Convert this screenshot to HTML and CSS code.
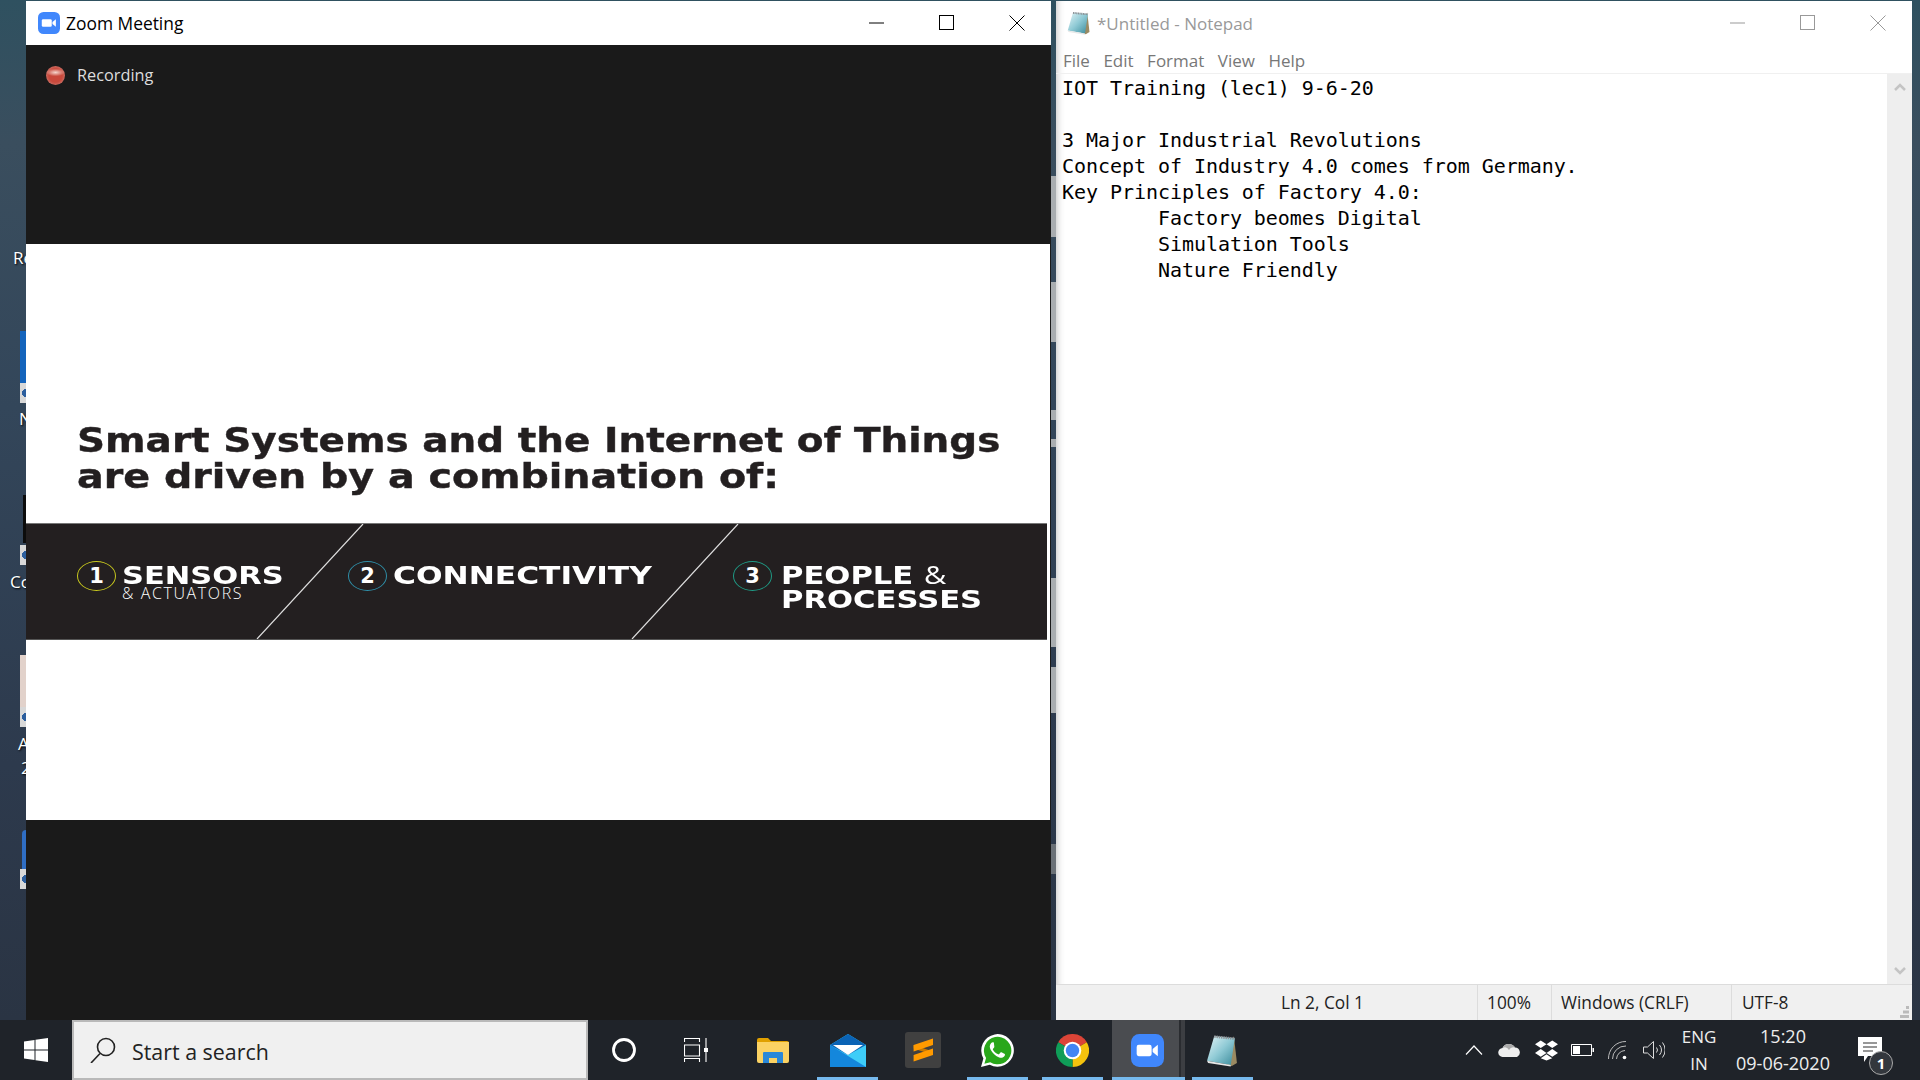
FILE: index.html
```html
<!DOCTYPE html>
<html>
	<head>
		<meta charset="utf-8">
		<title>Zoom Meeting</title>
		<link rel="stylesheet" href="styles.css">
	</head>
	<body>
		<svg class="defs" width="0" height="0">
			<symbol id="zoom-logo" viewBox="0 0 32 32">
				<rect width="32" height="32" rx="8" fill="#4087fc"/>
				<rect x="5.5" y="10.5" width="14.5" height="11" rx="2" fill="#fff"/>
				<path d="M21 14.5l5-4v11l-5-4z" fill="#fff"/>
			</symbol>
			<symbol id="notepad-logo" viewBox="0 0 32 32">
				<defs>
					<linearGradient id="pad" x1="0" y1="0" x2="1" y2="1">
						<stop offset="0" stop-color="#e4f4f6"/>
						<stop offset=".5" stop-color="#8fcad5"/>
						<stop offset="1" stop-color="#3a8a9a"/>
					</linearGradient>
				</defs>
				<path d="M27 2l3 26-5 3-6-2z" fill="#9a8a62"/>
				<path d="M8 2l20 2-4 26L1 26z" fill="url(#pad)"/>
				<path d="M1 26l23 4v1.500L2 28z" fill="#e8e8e8"/>
				<path d="M8 2.500l20 2" fill="none" stroke="#8c9094" stroke-width="2.500" stroke-dasharray="1.400 .8"/>
			</symbol>
		</svg>

		<div class="desktop">
			<!-- icons on the desktop, mostly hidden by the windows -->
			<span class="dlabel dlabel-re">Re</span>
			<div class="peek peek-blue"></div>
			<div class="peek peek-box peek-box1"></div>
			<span class="dlabel dlabel-n">N</span>
			<div class="peek peek-black"></div>
			<div class="peek peek-box peek-box2"></div>
			<span class="dlabel dlabel-co">Co</span>
			<div class="peek peek-pink"></div>
			<div class="peek peek-box peek-box3"></div>
			<span class="dlabel dlabel-a">A</span>
			<span class="dlabel dlabel-2">2</span>
			<div class="peek peek-blue2"></div>
			<div class="peek peek-box peek-box4"></div>
			<div class="peek peek-gap peek-gap1"></div>
			<div class="peek peek-gap peek-gap2"></div>
			<div class="peek peek-gap peek-gap3"></div>
			<div class="peek peek-gap peek-gap4"></div>
			<div class="peek peek-gap peek-gap5"></div>
			<div class="peek peek-gap peek-gap6"></div>
			<div class="peek peek-gap peek-gap7"></div>

			<!-- zoom window -->
			<div class="window zoom-win">
				<div class="titlebar">
					<svg class="title-icon zoom-title-icon"><use href="#zoom-logo"/></svg>
					<span class="title-text">Zoom Meeting</span>
					<div class="win-btns">
						<svg viewBox="0 0 16 16" class="win-btn"><path d="M0 8h15"/></svg>
						<svg viewBox="0 0 16 16" class="win-btn"><rect x=".5" y=".5" width="14" height="14"/></svg>
						<svg viewBox="0 0 16 16" class="win-btn"><path d="M.5.5l15 15M15.5.5l-15 15"/></svg>
					</div>
				</div>
				<div class="meeting-top">
					<div class="rec">
						<span class="rec-dot"></span>
						<span>Recording</span>
					</div>
				</div>
				<div class="slide">
					<div class="slide-head">
						<h1>
							<span class="line1">Smart Systems and the Internet of Things</span>
							<span class="line2">are driven by a combination of:</span>
						</h1>
					</div>
					<div class="banner">
						<div class="item">
							<span class="num num1">1</span>
							<div class="item-text">
								<b class="sensors">SENSORS</b>
								<small>&amp; ACTUATORS</small>
							</div>
						</div>
						<div class="item">
							<span class="num num2">2</span>
							<div class="item-text">
								<b class="connect">CONNECTIVITY</b>
							</div>
						</div>
						<div class="item">
							<span class="num num3">3</span>
							<div class="item-text item-text3">
								<b>PEOPLE <i>&amp;</i></b>
								<b>PROCESSES</b>
							</div>
						</div>
						<svg class="slashes" viewBox="0 0 1021 115">
							<path d="M337 0L231 115M712 0L606 115"/>
						</svg>
					</div>
				</div>
				<div class="meeting-bottom"></div>
			</div>

			<!-- notepad window -->
			<div class="window note-win">
				<div class="titlebar note-title">
					<svg class="title-icon note-title-icon"><use href="#notepad-logo"/></svg>
					<span class="title-text">*Untitled - Notepad</span>
					<div class="win-btns">
						<svg viewBox="0 0 16 16" class="win-btn"><path d="M0 8h15"/></svg>
						<svg viewBox="0 0 16 16" class="win-btn"><rect x=".5" y=".5" width="14" height="14"/></svg>
						<svg viewBox="0 0 16 16" class="win-btn"><path d="M.5.5l15 15M15.5.5l-15 15"/></svg>
					</div>
				</div>
				<div class="menu">
					<span>File</span>
					<span>Edit</span>
					<span>Format</span>
					<span>View</span>
					<span>Help</span>
				</div>
				<div class="editor">
					<pre class="text">IOT Training (lec1) 9-6-20

3 Major Industrial Revolutions
Concept of Industry 4.0 comes from Germany.
Key Principles of Factory 4.0:
	Factory beomes Digital
	Simulation Tools
	Nature Friendly</pre>
					<div class="scrollbar">
						<svg viewBox="0 0 12 10" class="arrow"><path d="M1 8l5-5 5 5"/></svg>
						<svg viewBox="0 0 12 10" class="arrow"><path d="M1 2l5 5 5-5"/></svg>
					</div>
				</div>
				<div class="status">
					<span class="cell cell-pos">Ln 2, Col 1</span>
					<span class="cell cell-zoom">100%</span>
					<span class="cell cell-eol">Windows (CRLF)</span>
					<span class="cell cell-enc">UTF-8</span>
					<svg class="grip" viewBox="0 0 9 12">
						<path d="M6 0h3v3H6zM3 4.500h3v3H3zM6 4.500h3v3H6zM0 9h3v3H0zM3 9h3v3H3zM6 9h3v3H6z"/>
					</svg>
				</div>
			</div>
		</div>

		<div class="taskbar">
			<div class="start">
				<svg viewBox="0 0 24 24" class="start-logo"><path d="M0 3.500l10.500-1.500v9.500H0zM11.500 1.800L24 0v11.500H11.500zM0 12.500h10.500V22L0 20.500zM11.500 12.500H24V24l-12.500-1.800z"/></svg>
			</div>
			<div class="search">
				<svg viewBox="0 0 26 26" class="search-icon"><circle cx="16" cy="10" r="8.500"/><path d="M10 16.500L1 26"/></svg>
				<span>Start a search</span>
			</div>
			<div class="task task-first">
				<svg viewBox="0 0 24 24" class="task-svg"><circle cx="12" cy="12" r="10.500" fill="none" stroke="#fff" stroke-width="2.800"/></svg>
			</div>
			<div class="task">
				<svg viewBox="0 0 24 24" class="task-svg task-view" fill="none" stroke="#fff" stroke-width="1.100">
					<path d="M.5 4V.5h15V4M.5 24v-3.500h15V24M.5 7h15v11H.5zM22 0v24"/>
					<path d="M20 10h4v4h-4z" fill="#fff" stroke="none"/>
				</svg>
			</div>
			<div class="task">
				<svg viewBox="0 0 32 26" class="task-explorer">
					<path d="M0 3a2 2 0 0 1 2-2h9l3 3h16a2 2 0 0 1 2 2v3H0z" fill="#e0a000"/>
					<path d="M0 5h32v19a2 2 0 0 1-2 2H2a2 2 0 0 1-2-2z" fill="#fbd263"/>
					<path d="M6 26V16a1 1 0 0 1 1-1h18a1 1 0 0 1 1 1v10h-6v-5h-8v5z" fill="#2a88d8"/>
				</svg>
			</div>
			<div class="task on">
				<svg viewBox="0 0 36 33" class="task-mail">
					<path d="M0 11l18-11 18 11v22H0z" fill="#3ecdf8"/>
					<path d="M0 11l36 22H0z" fill="#1487dc"/>
					<path d="M0 11L18 0l18 11-18 10z" fill="#0a63b5"/>
					<path d="M3 11h30L18 21z" fill="#fff"/>
				</svg>
			</div>
			<div class="task">
				<svg viewBox="0 0 36 36" class="task-big">
					<rect width="36" height="36" rx="3" fill="#404040"/>
					<path d="M8.600 13L28 19.500V23L8.600 16.500z" fill="#c87800"/>
					<path d="M28 6.500V13L8.600 19.500V13zM28 16.500V23L8.600 29.500V23z" fill="#ff9a00"/>
				</svg>
			</div>
			<div class="task on">
				<svg viewBox="0 0 32 32" class="task-icon">
					<path d="M0 32l2.300-8.300A15.800 15.800 0 1 1 8.500 29.800z" fill="#fff"/>
					<path d="M3.300 28.800l1.600-5.600A13.300 13.300 0 1 1 9 27.300z" fill="#29a71a"/>
					<path d="M11.500 8c-.6 0-1.300.3-1.800.9-1.500 1.800-1.600 4-.2 6.600 1.800 3.300 4.400 5.600 7.600 7 2.500 1 4.500.5 5.700-1.200.5-.8.500-1.700.3-2l-3.200-1.600c-.4-.2-.8 0-1 .3l-1.200 1.500c-.3.300-.6.300-1 .2-2.200-.9-4-2.500-5.100-4.500-.2-.4-.2-.7.100-1l1-1.200c.3-.3.300-.6.200-1L12.500 8.500c-.2-.4-.5-.5-1-.5z" fill="#fff"/>
				</svg>
			</div>
			<div class="task on">
				<svg viewBox="0 0 32 32" class="task-icon">
					<path d="M16 16L2.140 8A16 16 0 0 1 29.860 8z" fill="#db4437"/>
					<path d="M16 16L29.860 8A16 16 0 0 1 16 32z" fill="#f4c20d"/>
					<path d="M16 16L16 32A16 16 0 0 1 2.140 8z" fill="#0f9d58"/>
					<circle cx="16" cy="16" r="8.500" fill="#fff"/>
					<circle cx="16" cy="16" r="6.500" fill="#4285f4"/>
				</svg>
			</div>
			<div class="task active">
				<svg class="task-icon task-zoom"><use href="#zoom-logo"/></svg>
			</div>
			<div class="task on">
				<svg class="task-icon"><use href="#notepad-logo"/></svg>
			</div>

			<div class="tray">
				<div class="tray-slot">
					<svg viewBox="0 0 18 10" class="tray-chevron"><path d="M1 9.500l8-8.500 8 8.500"/></svg>
				</div>
				<div class="tray-slot">
					<svg viewBox="0 0 24 14" class="tray-cloud"><path d="M5 14a4.500 4.500 0 0 1-.5-9A7 7 0 0 1 17 4.500a5 5 0 0 1 2 9.500z" fill="#eee"/><path d="M4.500 5A7 7 0 0 1 17 4.500 5 5 0 0 0 11 7a5 5 0 0 0-6.500-2z" fill="#aaa"/></svg>
				</div>
				<div class="tray-slot">
					<svg viewBox="0 0 24 21" class="tray-drop"><path d="M6 0l6 4-6 4-6-4zM18 0l6 4-6 4-6-4zM6 9l6 4-6 4-6-4zM18 9l6 4-6 4-6-4zM12 14.500l6 4-6 2.500-6-2.500z" fill="#fff"/></svg>
				</div>
				<div class="tray-slot">
					<svg viewBox="0 0 23 12" class="tray-batt"><path d="M.5.500h20v11H.5z" fill="none" stroke="#fff"/><path d="M2 2h7v8H2z" fill="#fff"/><path d="M21.500 4H23v4h-1.500z" fill="#fff"/></svg>
				</div>
				<div class="tray-slot">
					<svg viewBox="0 0 20 19" class="tray-wifi" fill="none" stroke="#bbb"><path d="M.5 18A17 17 0 0 1 18 .5M4.500 18A13 13 0 0 1 18 5M8.500 18A9 9 0 0 1 17 9.500"/><circle cx="16.500" cy="16.500" r="1.800" fill="#fff" stroke="none"/></svg>
				</div>
				<div class="tray-slot">
					<svg viewBox="0 0 22 18" class="tray-vol" fill="none" stroke="#ddd"><path d="M.5 6h4L10.500.5v17L4.500 12h-4zM13.500 6.500a4 4 0 0 1 0 5M16.500 4a8 8 0 0 1 0 10M19.500 1.500a12 12 0 0 1 0 15"/></svg>
				</div>
				<div class="lang">
					<span>ENG</span>
					<span>IN</span>
				</div>
				<div class="clock">
					<span>15:20</span>
					<span>09-06-2020</span>
				</div>
				<div class="notif">
					<svg viewBox="0 0 24 26" class="notif-icon"><path d="M0 0h24v19H10l-4 6v-6H0z" fill="#fff"/><path d="M5 6h14M5 10h14M5 14h10" stroke="#333" stroke-width="1.200"/></svg>
					<span class="badge">1</span>
				</div>
			</div>
		</div>
	</body>
</html>
```

FILE: styles.css
```css
*{
	margin: 0;padding: 0;
	box-sizing: border-box;
}
html,body{
	width: 1920px;
	height: 1080px;
	overflow: hidden;
}
body{
	display: flex;
	flex-direction: column;
	font-family: "Open Sans", "Noto Sans", sans-serif;
	background: #2e3a4a;
}
.defs{
	position: absolute;
}

/* desktop: a free canvas, windows and icons sit where they were left */
.desktop{
	position: relative;
	height: 1020px;
	background: linear-gradient(180deg, #2f5160 0, #3a4e5e 14%, #33465a 40%, #2d3a4d 75%, #2a3443 100%);
}
.dlabel{
	position: absolute;
	color: #fff;
	font-size: 17px;
	line-height: 20px;
	text-shadow: 1px 1px 2px #000;
}
.dlabel-re{ left: 13px; top: 248px; }
.dlabel-n{ left: 19px; top: 409px; }
.dlabel-co{ left: 10px; top: 572px; }
.dlabel-a{ left: 18px; top: 734px; }
.dlabel-2{ left: 21px; top: 758px; }
.peek{
	position: absolute;
	left: 20px;
	width: 6px;
}
.peek-blue{ top: 331px; height: 52px; background: #1464bc; }
.peek-black{ top: 495px; height: 48px; left: 23px; width: 3px; background: #0c0c0c; }
.peek-pink{ top: 655px; height: 52px; background: #e2d2cb; }
.peek-blue2{ top: 830px; height: 39px; left: 22px; width: 4px; border-radius: 4px 0 0 0; background: #2f6ec4; }
.peek-box{
	height: 20px;
	background: radial-gradient(circle at 6px 50%, #2d5f9e 4px, #d8d8d8 4px);
}
.peek-box1{ top: 383px; }
.peek-box2{ top: 545px; }
.peek-box3{ top: 707px; }
.peek-box4{ top: 869px; }
.peek-gap{
	left: 1051px;
	width: 5px;
	background: #a9adb0;
}
.peek-gap1{ top: 176px; height: 61px; }
.peek-gap2{ top: 282px; height: 60px; }
.peek-gap3{ top: 410px; height: 10px; }
.peek-gap4{ top: 439px; height: 8px; }
.peek-gap5{ top: 578px; height: 69px; }
.peek-gap6{ top: 667px; height: 46px; }
.peek-gap7{ top: 844px; height: 30px; background: #6a7076; }

.window{
	position: absolute;
	top: 1px;
	height: 1019px;
	display: flex;
	flex-direction: column;
	background: #fff;
}
.zoom-win{
	left: 26px;
	width: 1025px;
	background: #1a1a1a;
}
.note-win{
	left: 1056px;
	width: 856px;
	box-shadow: inset 9px 0 9px -9px rgba(0,0,0,0.3);
}

/* title bars */
.titlebar{
	display: flex;
	align-items: center;
	height: 44px;
	flex: none;
}
.zoom-win .titlebar{
	background: #fff;
}
.title-icon{
	flex: none;
}
.zoom-title-icon{
	width: 22px;
	height: 22px;
	margin-left: 12px;
	margin-right: 6px;
}
.note-title-icon{
	width: 24px;
	height: 24px;
	margin-left: 11px;
	margin-right: 6px;
}
.title-text{
	font-size: 17.4px;
	color: #000;
}
.note-title .title-text{
	font-size: 17px;
	color: #999;
}
.win-btns{
	margin-left: auto;
	display: flex;
	gap: 54px;
	padding-right: 26px;
}
.win-btn{
	width: 16px;
	height: 16px;
	fill: none;
	stroke: #000;
	stroke-width: 1;
}
.note-title .win-btn{
	stroke: #999;
}

/* meeting */
.meeting-top{
	height: 199px;
	background: #1a1a1a;
	flex: none;
}
.rec{
	display: flex;
	align-items: center;
	gap: 12px;
	padding: 19px 0 0 20px;
	color: #ddd;
	font-size: 16.3px;
}
.rec-dot{
	width: 19px;
	height: 19px;
	border-radius: 50%;
	background:
		radial-gradient(ellipse 50% 20% at 50% 34%, #f5d6cd 0, rgba(245,214,205,0) 100%),
		radial-gradient(circle at 50% 50%, #c9493c 50%, #c9766c 78%, #8a6f6b 100%);
	filter: blur(0.6px);
}
.slide{
	height: 576px;
	background: #fff;
	display: flex;
	flex-direction: column;
	flex: none;
	width: 1024px;
}
.slide-head{
	height: 279px;
	display: flex;
	align-items: flex-end;
	padding: 0 0 28px 51px;
	flex: none;
}
h1{
	font-family: "DejaVu Sans", sans-serif;
	font-weight: bold;
	font-size: 33px;
	line-height: 36px;
	color: #231f20;
	white-space: nowrap;
	-webkit-text-stroke: 0.4px #231f20;
}
h1 span{
	display: block;
	transform-origin: left;
}
.line1{
	transform: scaleX(1.18);
}
.line2{
	transform: scaleX(1.2);
}
.banner{
	position: relative;
	width: 1021px;
	height: 117px;
	flex: none;
	background: #231f20;
	border-top: 1px solid #777;
	border-bottom: 1px solid #555;
	display: grid;
	grid-template-columns: 271px 385px 1fr;
	padding: 37px 0 0 51px;
	color: #fff;
	font-family: "DejaVu Sans", sans-serif;
}
.item{
	display: flex;
	align-items: flex-start;
	gap: 6px;
}
.num{
	width: 39px;
	height: 30px;
	border-radius: 50%;
	border: 1.5px solid #ccc;
	display: flex;
	align-items: center;
	justify-content: center;
	font-size: 21px;
	font-weight: bold;
	flex: none;
}
.num1{ border-color: #c8c81e; }
.num2{ border-color: #2f8fa8; }
.num3{ border-color: #1f9a85; }
.item-text{
	padding-top: 3px;
}
.item-text3{
	padding-top: 1px;
	margin-left: 3px;
}
.item-text b{
	display: block;
	font-size: 25px;
	line-height: 24px;
	transform: scaleX(1.225);
	transform-origin: left;
	white-space: nowrap;
}
.item-text .sensors{
	transform: scaleX(1.22);
}
.item-text .connect{
	transform: scaleX(1.25);
}
.item-text i{
	font-family: "Open Sans", sans-serif;
	font-style: normal;
	font-weight: normal;
}
.item-text small{
	display: block;
	margin-top: -2px;
	font-family: "Open Sans", sans-serif;
	font-weight: 300;
	font-size: 16px;
	line-height: 14px;
	letter-spacing: 1.6px;
	white-space: nowrap;
}
.slashes{
	position: absolute;
	left: 0;
	top: 0;
	width: 1021px;
	height: 115px;
	fill: none;
	stroke: #ddd;
	stroke-width: 1.2;
}
.meeting-bottom{
	flex: 1;
	background: #1a1a1a;
}

/* notepad */
.menu{
	height: 29px;
	flex: none;
	display: flex;
	align-items: center;
	gap: 13.500px;
	padding: 2px 0 0 7px;
	font-size: 17px;
	color: #777;
	border-bottom: 1px solid #f0f0f0;
}
.editor{
	flex: 1;
	display: flex;
	min-height: 0;
}
.text{
	flex: 1;
	font-family: "DejaVu Sans Mono", monospace;
	font-size: 20px;
	letter-spacing: -0.05px;
	line-height: 26px;
	tab-size: 8;
	padding: 1px 0 0 6px;
	color: #000;
}
.scrollbar{
	width: 25px;
	background: #eee;
	display: flex;
	flex-direction: column;
	justify-content: space-between;
	align-items: center;
	padding: 8px 0;
}
.arrow{
	width: 12px;
	height: 10px;
	fill: none;
	stroke: #c4c4c4;
	stroke-width: 2.5;
}
.status{
	position: relative;
	height: 36px;
	flex: none;
	background: #f0f0f0;
	border-top: 1px solid #dcdcdc;
	display: flex;
	align-items: center;
	font-size: 17.3px;
	color: #222;
}
.cell{
	height: 100%;
	display: flex;
	align-items: center;
	border-right: 1px solid #dcdcdc;
	white-space: nowrap;
}
.cell-pos{ width: 422px; padding-left: 225px; }
.cell-zoom{ width: 74px; padding-left: 9px; }
.cell-eol{ width: 180px; padding-left: 9px; }
.cell-enc{ border-right: 0; padding-left: 10px; }
.grip{
	position: absolute;
	right: 3px;
	bottom: 2px;
	width: 9px;
	height: 12px;
	fill: #bbb;
}

/* taskbar */
.taskbar{
	height: 60px;
	flex: none;
	display: flex;
	background: #1f2329;
	color: #eee;
}
.start{
	width: 72px;
	display: flex;
	align-items: center;
	justify-content: center;
}
.start-logo{
	width: 24px;
	height: 24px;
	fill: #fff;
}
.search{
	width: 516px;
	display: flex;
	align-items: center;
	gap: 16px;
	padding: 2px 0 0 16px;
	background: #f0f0f0;
	border: 2px solid #b9b9b9;
	color: #222;
	font-size: 21.4px;
}
.search-icon{
	width: 26px;
	height: 26px;
	fill: none;
	stroke: #222;
	stroke-width: 1.6;
	margin-bottom: 2px;
}
.task{
	position: relative;
	width: 75px;
	display: flex;
	align-items: center;
	justify-content: center;
}
.task-first{
	width: 72px;
}
.task.on::after{
	content: "";
	position: absolute;
	left: 7px;
	right: 7px;
	bottom: 0;
	height: 3px;
	background: #76b9ed;
}
.task.active{
	background: linear-gradient(90deg, transparent 2px, #4a4c50 2px, #4a4c50 69px, #2a2c30 69px, #2a2c30 71px, #3c3e42 71px);
}
.task.active::after{
	content: "";
	position: absolute;
	left: 2px;
	right: 0;
	bottom: 0;
	height: 3px;
	background: #76b9ed;
}
.task-svg{
	width: 24px;
	height: 24px;
}
.task-view{
	margin-right: 3px;
}
.task-explorer{
	width: 32px;
	height: 26px;
}
.task-mail{
	width: 36px;
	height: 33px;
}
.task-big{
	width: 36px;
	height: 36px;
}
.task-icon{
	width: 33px;
	height: 33px;
}
.tray{
	margin-left: auto;
	display: flex;
	align-items: center;
	padding-right: 20px;
}
.tray-slot{
	width: 36px;
	height: 60px;
	display: flex;
	align-items: center;
	justify-content: center;
}
.tray-chevron{
	width: 18px;
	height: 10px;
	fill: none;
	stroke: #fff;
	stroke-width: 1.2;
}
.tray-cloud{ width: 24px; height: 14px; }
.tray-drop{ width: 23px; height: 21px; }
.tray-batt{ width: 23px; height: 12px; }
.tray-wifi{ width: 20px; height: 19px; }
.tray-vol{ width: 22px; height: 18px; }
.lang,.clock{
	display: flex;
	flex-direction: column;
	align-items: center;
	font-size: 17px;
	line-height: 27px;
	white-space: nowrap;
}
.lang{
	width: 54px;
}
.clock{
	width: 114px;
	font-size: 18px;
}
.notif{
	position: relative;
	width: 60px;
	height: 60px;
	display: flex;
	align-items: center;
	justify-content: center;
}
.notif-icon{
	width: 24px;
	height: 26px;
}
.badge{
	position: absolute;
	left: 29px;
	top: 31px;
	width: 24px;
	height: 24px;
	border-radius: 50%;
	border: 1px solid #aaa;
	background: #33373d;
	color: #fff;
	font-size: 15px;
	font-weight: bold;
	display: flex;
	align-items: center;
	justify-content: center;
}
```
